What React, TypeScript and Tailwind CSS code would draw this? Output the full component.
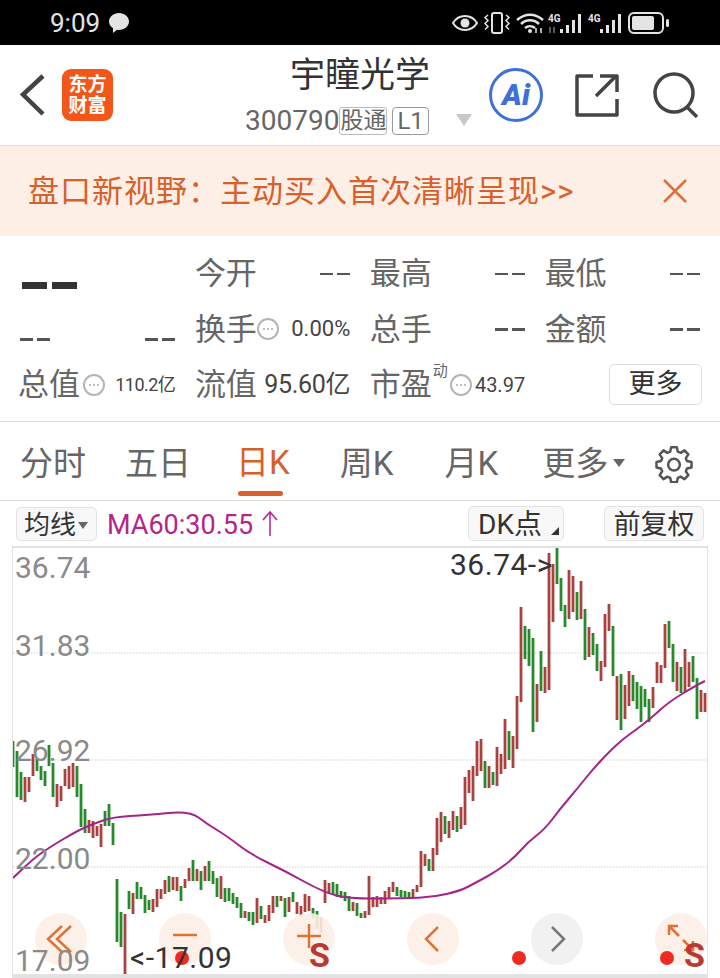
import React from 'react';

const FONT = "font-['Roboto','Noto_Sans_CJK_SC',sans-serif]";

type Candle = [number, number, number, 'r' | 'g'];

const candles: Candle[] = [
  [13, 742, 768, 'g'], [17, 752, 798, 'g'], [21, 773, 801, 'g'], [25, 778, 803, 'r'], [29, 778, 793, 'r'],
  [33, 755, 777, 'r'], [37, 760, 772, 'g'], [41, 767, 781, 'g'], [45, 772, 787, 'g'], [49, 746, 767, 'g'],
  [53, 764, 798, 'g'], [57, 785, 808, 'r'], [61, 787, 802, 'r'], [65, 770, 787, 'r'], [69, 767, 790, 'r'],
  [73, 764, 788, 'r'], [77, 767, 798, 'g'], [81, 785, 828, 'g'], [85, 810, 834, 'g'], [89, 821, 834, 'r'],
  [93, 822, 839, 'r'], [97, 827, 837, 'r'], [101, 825, 848, 'r'], [105, 812, 827, 'g'], [109, 805, 827, 'g'],
  [113, 824, 846, 'g'],
  [117, 880, 943, 'g'], [121, 913, 948, 'g'], [125, 915, 975, 'r'], [129, 892, 910, 'g'], [133, 894, 915, 'r'],
  [137, 883, 900, 'g'], [141, 888, 900, 'g'], [145, 896, 914, 'g'], [149, 901, 911, 'g'], [153, 900, 913, 'r'],
  [157, 890, 908, 'r'], [161, 890, 900, 'r'], [165, 881, 895, 'r'], [169, 877, 893, 'g'], [173, 878, 891, 'r'],
  [177, 878, 892, 'r'], [181, 887, 902, 'g'], [185, 880, 889, 'r'], [189, 869, 882, 'r'], [193, 861, 882, 'g'],
  [197, 870, 882, 'r'], [201, 872, 891, 'g'], [205, 867, 882, 'r'], [209, 862, 882, 'g'], [213, 872, 885, 'g'],
  [217, 879, 898, 'g'], [221, 877, 900, 'r'], [225, 889, 903, 'g'], [229, 889, 902, 'g'], [233, 894, 905, 'g'],
  [237, 898, 909, 'g'], [241, 904, 919, 'g'], [245, 912, 919, 'r'], [249, 913, 922, 'g'], [253, 913, 926, 'g'],
  [257, 899, 924, 'r'], [261, 907, 920, 'g'], [265, 916, 924, 'r'], [269, 906, 922, 'r'], [273, 897, 914, 'r'],
  [277, 897, 908, 'g'], [281, 897, 902, 'r'], [285, 899, 918, 'g'], [289, 898, 913, 'r'], [293, 893, 903, 'g'],
  [297, 903, 915, 'r'], [301, 907, 918, 'r'], [305, 895, 913, 'r'], [309, 897, 912, 'r'], [313, 909, 919, 'g'],
  [317, 912, 930, 'g'], [321, 918, 934, 'r'], [325, 881, 904, 'r'], [329, 884, 895, 'r'], [333, 883, 895, 'g'],
  [337, 885, 898, 'g'], [341, 892, 899, 'g'], [345, 893, 902, 'g'], [349, 897, 912, 'g'], [353, 903, 912, 'r'],
  [357, 904, 917, 'g'], [361, 914, 919, 'g'], [365, 912, 919, 'r'], [369, 877, 916, 'r'], [373, 898, 908, 'r'],
  [377, 897, 908, 'r'], [381, 898, 905, 'r'], [385, 892, 905, 'r'], [389, 888, 899, 'r'], [393, 883, 893, 'r'],
  [397, 888, 897, 'g'], [401, 891, 898, 'g'], [405, 892, 898, 'g'], [409, 893, 899, 'g'], [413, 890, 899, 'r'],
  [417, 886, 893, 'r'], [421, 852, 888, 'r'], [425, 855, 867, 'r'], [429, 860, 872, 'g'], [433, 849, 872, 'r'],
  [437, 819, 856, 'r'], [441, 813, 843, 'r'], [445, 817, 835, 'g'], [449, 822, 839, 'r'], [453, 812, 831, 'r'],
  [457, 817, 833, 'g'], [461, 808, 830, 'r'], [465, 778, 826, 'r'], [469, 771, 794, 'r'], [473, 767, 802, 'r'],
  [477, 742, 777, 'r'], [481, 740, 772, 'r'], [485, 762, 789, 'g'], [489, 767, 789, 'r'], [493, 773, 786, 'g'],
  [497, 748, 787, 'r'], [501, 755, 775, 'r'], [505, 720, 770, 'r'], [509, 732, 761, 'g'], [513, 737, 769, 'r'],
  [517, 697, 750, 'r'], [521, 608, 703, 'r'], [525, 627, 660, 'g'], [529, 630, 667, 'g'], [533, 639, 733, 'g'],
  [537, 685, 723, 'r'], [541, 652, 692, 'g'], [545, 668, 694, 'r'], [549, 554, 691, 'r'], [553, 565, 623, 'r'],
  [557, 548, 585, 'g'], [561, 579, 612, 'g'], [565, 606, 628, 'g'], [569, 571, 620, 'r'], [573, 577, 613, 'r'],
  [577, 593, 621, 'g'], [581, 582, 620, 'r'], [585, 610, 661, 'g'], [589, 628, 658, 'r'], [593, 634, 656, 'g'],
  [597, 645, 672, 'g'], [601, 662, 682, 'r'], [605, 615, 668, 'r'], [609, 605, 632, 'r'], [613, 627, 677, 'g'],
  [617, 677, 721, 'r'], [621, 675, 731, 'g'], [625, 686, 720, 'r'], [629, 672, 707, 'r'], [633, 676, 702, 'g'],
  [637, 683, 710, 'g'], [641, 687, 723, 'g'], [645, 690, 708, 'g'], [649, 700, 723, 'g'], [653, 688, 709, 'r'],
  [657, 663, 684, 'r'], [661, 666, 684, 'r'], [665, 625, 669, 'r'], [669, 622, 649, 'g'], [673, 645, 683, 'g'],
  [677, 663, 692, 'r'], [681, 668, 694, 'g'], [685, 650, 693, 'r'], [689, 663, 688, 'r'], [693, 657, 683, 'g'],
  [697, 679, 720, 'g'], [701, 691, 713, 'r'], [705, 694, 713, 'r'],
];

const maPoints = [
  [13, 879], [33, 860], [50, 848], [77, 832], [93, 825], [113, 818], [147, 816], [190, 812], [207, 825], [227, 837],
  [250, 855], [287, 873], [323, 893], [350, 900], [410, 899], [433, 898], [460, 892], [477, 883], [497, 872],
  [515, 858], [528, 843], [545, 830], [560, 810], [577, 790], [593, 770], [610, 752], [623, 740], [637, 730],
  [650, 720], [670, 702], [697, 686], [705, 682],
];

// rounds the corners of the MA line through the midpoints of its segments
const maPath = maPoints.reduce((d, [x, y], i) => {
  if (i === 0) return `M${x} ${y}`;
  const [px, py] = maPoints[i - 1];
  return `${d} Q${px} ${py} ${(px + x) / 2} ${(py + y) / 2}`;
}, '') + ' L705 682';

const StatusIcons = () => (
  <svg width="224" height="24" viewBox="0 0 224 24" fill="none" className="text-[#e4e4e4]" stroke="currentColor">
    {/* eye */}
    <path d="M7 12c3-5 7-7 12-7s9 2 12 7c-3 5-7 7-12 7s-9-2-12-7z" strokeWidth="2" />
    <circle cx="19" cy="12" r="4.500" fill="currentColor" stroke="none" />
    {/* vibrate */}
    <rect x="46" y="2" width="10" height="20" rx="2" strokeWidth="2" />
    <path d="M42 4l-3 2.500 3 3-3 3 3 3-3 3M60 4l3 2.500-3 3 3 3-3 3 3 3" strokeWidth="1.500" />
    {/* wifi */}
    <path d="M71 9c8-7 18-7 26 0M75 13c5-5 13-5 18 0M79 17c3-2.500 7-2.500 10 0" strokeWidth="2.500" />
    <circle cx="84" cy="20" r="2" fill="currentColor" stroke="none" />
    <path d="M90 17v5M95 17v5" strokeWidth="1.500" />
    {/* signal */}
    <g stroke="none" fill="currentColor">
      <text x="102" y="11" fontSize="10" fontWeight="700">4G</text>
      <rect x="114" y="18" width="3" height="4" />
      <rect x="120" y="14" width="3" height="8" />
      <rect x="126" y="9" width="3" height="13" />
      <rect x="132" y="3" width="3" height="19" />
      <text x="142" y="11" fontSize="10" fontWeight="700">4G</text>
      <rect x="154" y="18" width="3" height="4" />
      <rect x="160" y="14" width="3" height="8" />
      <rect x="166" y="9" width="3" height="13" />
      <rect x="172" y="3" width="3" height="19" />
    </g>
    <path d="M104 16v6M108 16v6" stroke="#777" strokeWidth="1.500" />
    {/* battery */}
    <rect x="183" y="2" width="34" height="20" rx="5" strokeWidth="2" />
    <rect x="186" y="5" width="22" height="14" rx="2" fill="currentColor" stroke="none" />
    <rect x="220" y="8" width="3" height="8" rx="1.500" fill="currentColor" stroke="none" />
  </svg>
);

const InfoDot = () => (
  <span className="w-[22px] h-[22px] rounded-full border-2 border-[#b5b5b5] flex items-center justify-center gap-[2px] shrink-0">
    <i className="w-[2px] h-[2px] rounded-full bg-[#aaa]" />
    <i className="w-[2px] h-[2px] rounded-full bg-[#aaa]" />
    <i className="w-[2px] h-[2px] rounded-full bg-[#aaa]" />
  </span>
);

const Dashes = () => (
  <span className="flex gap-[4px]">
    <i className="w-[13px] h-[2.500px] bg-[#555]" />
    <i className="w-[13px] h-[2.500px] bg-[#555]" />
  </span>
);

const Stat = ({ label }: { label: string }) => (
  <div className="flex items-center justify-between">
    <span className="text-[31px] leading-none text-[#666]">{label}</span>
    <Dashes />
  </div>
);

const ChartButton = ({ gray, children }: { gray?: boolean; children: React.ReactNode }) => (
  <div
    className={
      gray
        ? 'w-[52px] h-[52px] rounded-full bg-[#f1f1f1] flex items-center justify-center'
        : 'w-[52px] h-[52px] rounded-full bg-[#fdeee6]/90 flex items-center justify-center'
    }
  >
    <svg width="32" height="32" viewBox="0 0 32 32" fill="none" strokeWidth="2.5" stroke={gray ? '#777' : '#dd7436'}>
      {children}
    </svg>
  </div>
);

const AxisLabel = ({ className, children }: { className: string; children: string }) => (
  <span className={`absolute left-[2px] text-[30px] leading-none text-[#8a8a8a] ${className}`}>{children}</span>
);

export default function App() {
  return (
    <div className={`w-[720px] h-[978px] overflow-hidden bg-white flex flex-col ${FONT}`}>
      {/* status bar */}
      <div className="h-[45px] bg-black flex items-center justify-between pl-[50px] pr-[50px] shrink-0">
        <div className="flex items-center gap-2">
          <span className="text-[26px] leading-none text-[#e4e4e4]">9:09</span>
          <svg width="22" height="22" viewBox="0 0 22 22" fill="#e4e4e4">
            <path d="M11 1c5.500 0 10 3.800 10 8.500S16.500 18 11 18c-.7 0-1.300 0-2-.2L5 21v-4.800C2.500 14.600 1 12.200 1 9.500 1 4.800 5.500 1 11 1z" />
          </svg>
        </div>
        <StatusIcons />
      </div>

      {/* header */}
      <div className="h-[101px] shrink-0 border-b border-[#ddd] flex items-center pl-[20px]">
        <svg width="26" height="42" viewBox="0 0 26 42" fill="none" stroke="#444" strokeWidth="4.5" className="shrink-0">
          <path d="M23 2L3 20.500 23 40" />
        </svg>
        <div className="ml-[16px] w-[51px] h-[52px] rounded-[9px] bg-[#f4561a] flex flex-col items-center justify-center text-white text-[19px] font-bold text-center shrink-0">
          <span className="leading-[21px]">东方</span>
          <span className="leading-[21px]">财富</span>
        </div>
        <div className="ml-[132px] w-[177px] flex flex-col items-start shrink-0">
          <span className="ml-[45px] text-[35px] leading-[42px] text-[#333] whitespace-nowrap">宇瞳光学</span>
          <div className="flex items-center text-[#666] mt-[10px] whitespace-nowrap">
            <span className="text-[28px] leading-none">300790</span>
            <span className="text-[23px] leading-[26px] border border-[#bbb] rounded-[3px]">股通</span>
            <span className="ml-[5px] text-[24px] leading-[26px] px-[4px] border border-[#999] rounded-[4px]">L1</span>
          </div>
        </div>
        <div className="ml-[34px] mt-[50px] w-0 h-0 border-x-[8px] border-x-transparent border-t-[12px] border-t-[#c8c8c8] shrink-0" />
        <div className="ml-[17px] w-[54px] h-[54px] rounded-full border-[3px] border-[#3d70d9] flex items-center justify-center shrink-0">
          <span className="text-[#3d70d9] text-[30px] leading-none font-black italic font-['Roboto',sans-serif]">Ai</span>
        </div>
        <svg width="44" height="44" viewBox="0 0 44 44" fill="none" stroke="#444" strokeWidth="3.5" className="ml-[32px] shrink-0">
          <path d="M18 3H2v39h40V26" strokeLinejoin="round" />
          <path d="M21 23L41 3M25 3h17v16" strokeLinejoin="round" />
        </svg>
        <svg width="46" height="46" viewBox="0 0 46 46" fill="none" stroke="#444" strokeWidth="3.5" className="ml-[34px] shrink-0">
          <circle cx="21" cy="21" r="19" />
          <path d="M34 35l10 10" />
        </svg>
      </div>

      {/* banner */}
      <div className="h-[90px] shrink-0 bg-[#fdeee6] flex items-center justify-between pl-[28px] pr-[33px]">
        <span className="text-[31px] leading-none text-[#d8602a] tracking-[1px] whitespace-nowrap">盘口新视野：主动买入首次清晰呈现&gt;&gt;</span>
        <svg width="24" height="24" viewBox="0 0 24 24" fill="none" stroke="#e0703a" strokeWidth="2.5">
          <path d="M1 1l22 22M23 1L1 23" />
        </svg>
      </div>

      {/* stats */}
      <div className="h-[186px] shrink-0 border-b border-[#ddd] px-5 pt-[10px] grid grid-cols-4 gap-x-[19.5px] auto-rows-[55.500px] items-center text-[#666]">
        <div className="flex gap-[5px] pt-[24px] pl-[2px]">
          <i className="w-[25px] h-[7px] bg-[#333]" />
          <i className="w-[25px] h-[7px] bg-[#333]" />
        </div>
        <Stat label="今开" />
        <Stat label="最高" />
        <Stat label="最低" />

        <div className="flex justify-between pt-[20px]">
          <Dashes />
          <Dashes />
        </div>
        <div className="flex items-center">
          <span className="text-[31px] leading-none">换手</span>
          <InfoDot />
          <span className="ml-auto text-[22px] leading-none text-[#444]">0.00%</span>
        </div>
        <Stat label="总手" />
        <Stat label="金额" />

        <div className="flex items-center">
          <span className="text-[31px] leading-none -ml-[2px]">总值</span>
          <span className="ml-[3px]"><InfoDot /></span>
          <span className="ml-auto text-[18px] leading-none text-[#444] tracking-[-0.5px] whitespace-nowrap">110.2亿</span>
        </div>
        <div className="flex items-center">
          <span className="text-[31px] leading-none">流值</span>
          <span className="ml-auto text-[25px] leading-none text-[#444] tracking-[-0.3px] whitespace-nowrap">95.60亿</span>
        </div>
        <div className="flex items-center">
          <span className="text-[31px] leading-none">市盈</span>
          <span className="text-[15px] leading-none -mt-[26px] ml-[1px]">动</span>
          <span className="ml-[2px]"><InfoDot /></span>
          <span className="ml-auto text-[20px] leading-none text-[#444]">43.97</span>
        </div>
        <div className="flex justify-end -mr-[2px]">
          <span className="w-[93px] h-[41px] rounded-[5px] border border-[#ddd] text-[27px] leading-[38px] text-center text-[#333]">更多</span>
        </div>
      </div>

      {/* period tabs */}
      <div className="h-[79px] shrink-0 border-b border-[#ddd] flex items-center pl-[20px] pr-[26px] pt-[4px] text-[33px] text-[#666]">
        <span className="leading-none">分时</span>
        <span className="leading-none ml-[39px]">五日</span>
        <div className="ml-[45px] relative">
          <span className="leading-none text-[#d8602a]">日K</span>
          <i className="absolute left-[2px] -bottom-[8px] w-[45px] h-[5px] rounded-full bg-[#d8602a]" />
        </div>
        <span className="leading-none ml-[50px]">周K</span>
        <span className="leading-none ml-[51px]">月K</span>
        <span className="leading-none ml-[44px]">更多</span>
        <i className="ml-[5px] w-0 h-0 border-x-[6px] border-x-transparent border-t-[8px] border-t-[#666]" />
        <svg width="40" height="40" viewBox="0 0 24 24" fill="none" stroke="#555" strokeWidth="1.500" className="ml-auto">
          <path d="M10.300 2.500h3.400l.6 2.700 1.700.7 2.300-1.500 2.300 2.400-1.500 2.300.7 1.700 2.700.6v3.300l-2.700.6-.7 1.700 1.500 2.300-2.300 2.400-2.300-1.500-1.700.7-.6 2.700h-3.400l-.6-2.700-1.700-.7-2.300 1.500-2.300-2.400 1.500-2.300-.7-1.700-2.700-.6v-3.300l2.700-.6.7-1.700-1.500-2.300 2.300-2.400 2.300 1.500 1.700-.7z" strokeLinejoin="round" />
          <circle cx="12" cy="13" r="3.500" />
        </svg>
      </div>

      {/* toolbar */}
      <div className="h-[45px] shrink-0 flex items-center pl-[16px] pr-[16px]">
        <div className="w-[81px] h-[34px] rounded-[5px] border border-[#e2e2e2] bg-[#f8f8f8] flex items-center pl-[7px] pt-[3px] text-[26px] text-[#333]">
          <span className="leading-none">均线</span>
          <i className="ml-[2px] w-0 h-0 border-x-[5px] border-x-transparent border-t-[7px] border-t-[#666]" />
        </div>
        <span className="ml-[10px] mt-[3px] text-[27px] leading-none text-[#b5248c]">MA60:30.55</span>
        <svg width="18" height="28" viewBox="0 0 18 28" fill="none" stroke="#b5248c" strokeWidth="1.500" className="ml-[8px]">
          <path d="M9 26V2M2 10l7-8 7 8" />
        </svg>
        <div className="ml-auto w-[96px] h-[35px] rounded-[5px] border border-[#e2e2e2] bg-[#f8f8f8] relative flex items-center pl-[9px] pt-[3px] text-[28px] text-[#333]">
          <span className="leading-none">DK点</span>
          <i className="absolute right-[4px] bottom-[5px] w-0 h-0 border-l-[8px] border-l-transparent border-b-[8px] border-b-[#333]" />
        </div>
        <div className="ml-[40px] w-[100px] h-[35px] rounded-[5px] border border-[#e2e2e2] bg-[#f8f8f8] flex items-center justify-center pt-[3px] text-[27px] text-[#333]">
          <span className="leading-none">前复权</span>
        </div>
      </div>

      {/* chart */}
      <div className="ml-[12px] w-[696px] flex-1 border-t-2 border-x border-b-4 border-[#e2e2e2] relative overflow-hidden">
        <svg width="694" height="430" viewBox="13 549 694 430" className="absolute left-0 top-0">
          {[654, 761, 868].map(y => (
            <line key={y} x1="13" x2="707" y1={y} y2={y} stroke="#cfcfcf" strokeWidth="1" strokeDasharray="1.500 1.500" />
          ))}
          {candles.map(([x, top, bottom, c]) => (
            <line key={x} x1={x} x2={x} y1={top} y2={bottom} stroke={c === 'r' ? '#aa4141' : '#26892c'} strokeWidth="2.800" />
          ))}
          <path d={maPath} fill="none" stroke="#a3248a" strokeWidth="2" strokeLinejoin="round" />
        </svg>

        <AxisLabel className="top-[5px]">36.74</AxisLabel>
        <AxisLabel className="top-[83px]">31.83</AxisLabel>
        <AxisLabel className="top-[188px]">26.92</AxisLabel>
        <AxisLabel className="top-[296px]">22.00</AxisLabel>

        <div className="absolute left-[22px] top-[365px] flex gap-[72px]">
          <ChartButton>
            <path d="M17 3L3 16l14 13M26 3L12 16l14 13" />
          </ChartButton>
          <ChartButton>
            <path d="M4 12h24" />
          </ChartButton>
          <ChartButton>
            <path d="M4 13h24M16 1v24" />
          </ChartButton>
          <ChartButton>
            <path d="M21 4L9 16l12 12" />
          </ChartButton>
          <ChartButton gray>
            <path d="M11 4l12 12-12 12" />
          </ChartButton>
          <ChartButton>
            <path d="M4 3l10 10M4 12V3h9M18 17l10 10M28 18v9h-9" />
          </ChartButton>
        </div>

        <AxisLabel className="top-[398px]">17.09</AxisLabel>

        <i className="absolute left-[162px] top-[403px] w-[14px] h-[14px] rounded-full bg-[#ee2a22]" />
        <i className="absolute left-[499px] top-[403px] w-[14px] h-[14px] rounded-full bg-[#ee2a22]" />
        <i className="absolute left-[647px] top-[403px] w-[14px] h-[14px] rounded-full bg-[#ee2a22]" />

        <span className="absolute left-[437px] top-[2px] text-[30px] leading-none text-[#333] tracking-[0.5px]">36.74-&gt;</span>
        <span className="absolute left-[117px] top-[395px] text-[30px] leading-none text-[#333] tracking-[0.5px]">&lt;-17.09</span>

        <span className="absolute left-[296px] top-[390px] text-[34px] leading-none font-bold text-[#b83a32]">S</span>
        <span className="absolute left-[671px] top-[390px] text-[34px] leading-none font-bold text-[#b83a32]">S</span>
      </div>
    </div>
  );
}
